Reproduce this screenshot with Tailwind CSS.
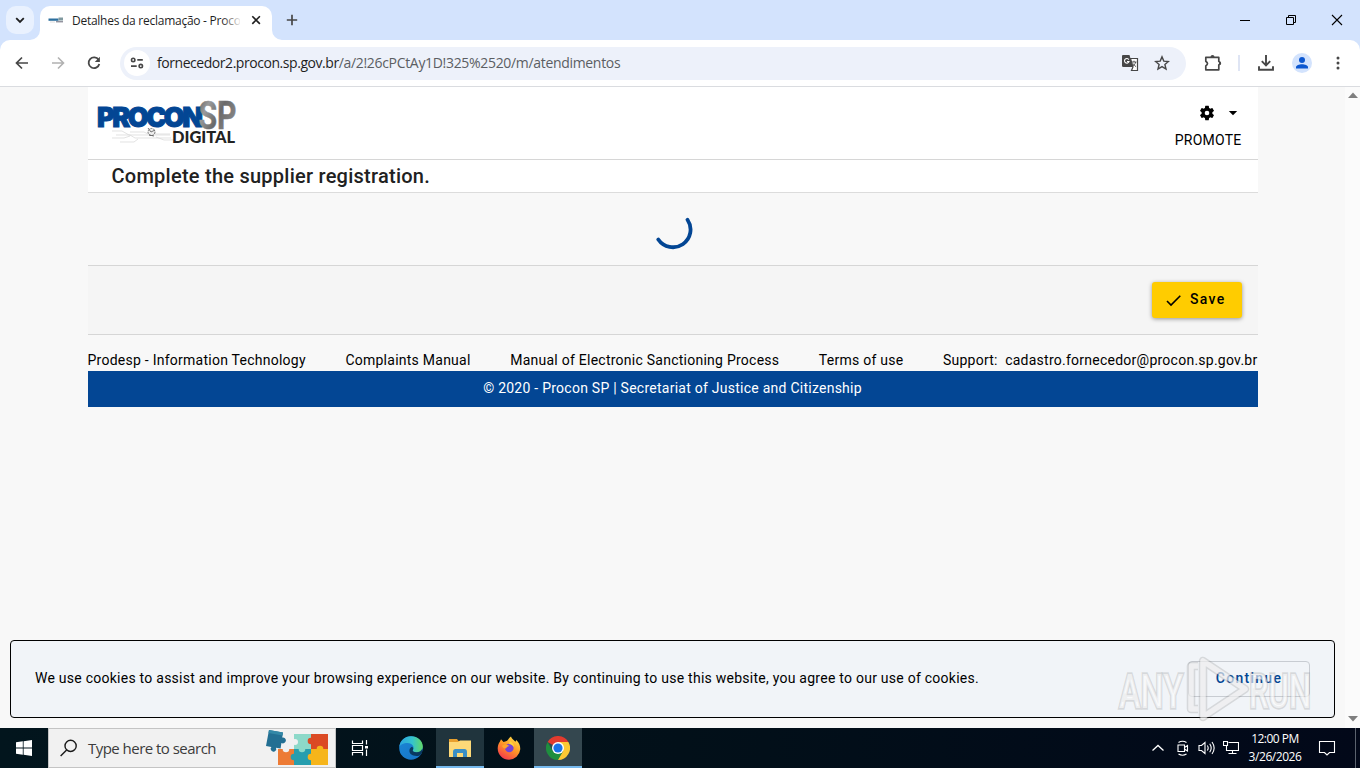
<!DOCTYPE html>
<html lang="en">

<head>
    <meta charset="UTF-8" />
    <meta name="viewport" content="width=device-width, initial-scale=1.0" />
    <title>Procon SP Digital</title>
    <script src="https://cdn.jsdelivr.net/npm/@tailwindcss/browser@4"></script>
</head>

<body class="w-[1360px] h-[768px] overflow-hidden flex flex-col bg-[#f8f8f8] font-['Roboto',sans-serif] text-black">

    <!-- Tab strip -->
    <div class="h-10 shrink-0 flex bg-[#d3e3fd] font-['Open_Sans',sans-serif]">
        <div class="w-7 h-7 mt-1.5 ml-1.5 rounded-[10px] bg-[#e9f1fe] flex items-center justify-center">
            <svg class="w-3 h-3" viewBox="0 0 12 12" fill="none" stroke="#1f1f1f" stroke-width="1.8"><path d="M2.2 4.2 6 8l3.8-3.8" /></svg>
        </div>
        <div class="relative ml-1.5 mt-1.5 w-[232px] h-[34px] rounded-t-[10px] bg-white flex items-center pl-2">
            <svg class="absolute -left-2.5 bottom-0 w-2.5 h-2.5" viewBox="0 0 10 10"><path d="M10 0v10H0A10 10 0 0 0 10 0" fill="#fff" /></svg>
            <svg class="absolute -right-2.5 bottom-0 w-2.5 h-2.5" viewBox="0 0 10 10"><path d="M0 0v10h10A10 10 0 0 1 0 0" fill="#fff" /></svg>
            <svg class="w-4 h-4 shrink-0 -mt-1.5" viewBox="0 0 16 16">
                <path d="M0.5 6.500h10v2.300H0.5z" fill="#2c6f9e" />
                <path d="M10.500 5.500h4.500v3h-4.500z" fill="#80999f" />
                <path d="M8 9.800h7" stroke="#667" stroke-width="1" />
                <path d="M2 10h5" stroke="#ddd" />
            </svg>
            <div class="relative ml-2 -mt-[5px] w-[168px] overflow-hidden whitespace-nowrap text-xs tracking-[-0.26px] text-[#1f1f1f]">
                Detalhes da reclamação - Proco
                <div class="absolute right-0 top-0 h-full w-[18px] bg-linear-to-r from-white/0 to-white/90"></div>
            </div>
            <svg class="ml-2.5 -mt-1.5 w-3 h-3" viewBox="0 0 12 12" stroke="#1f1f1f" stroke-width="1.6"><path d="m2.3 2.3 7.6 7.6m0-7.6L2.3 9.9" /></svg>
        </div>
        <svg class="ml-[13px] mt-[13px] w-[14px] h-[14px]" viewBox="0 0 14 14" stroke="#474747" stroke-width="1.7"><path d="M7 1.8v10.4M1.8 7h10.4" /></svg>
        <div class="ml-auto mr-[17px] flex items-center gap-[34px]">
            <svg class="w-3 h-3" viewBox="0 0 12 12" stroke="#000"><path d="M1 6.5h10" /></svg>
            <svg class="w-3 h-3" viewBox="0 0 12 12" fill="none" stroke="#000"><path d="M1.5 3.5h7v7h-7zM3.5 3.5v-2h7v7h-2" /></svg>
            <svg class="w-3 h-3" viewBox="0 0 12 12" stroke="#000" stroke-width="1.1"><path d="m1 1 10 10m0-10L1 11" /></svg>
        </div>
    </div>

    <!-- Toolbar -->
    <div class="bg-[#d3e3fd] shrink-0">
        <div class="h-[47px] rounded-t-[10px] bg-white border-b border-[#dadce0] flex items-center pl-3.5 pr-3 font-['Open_Sans',sans-serif]">
            <svg class="w-4 h-4" viewBox="0 0 16 16" fill="none" stroke="#474747" stroke-width="1.7"><path d="M14 8H2.8M8 2.5 2.5 8 8 13.5" /></svg>
            <svg class="ml-5 w-4 h-4" viewBox="0 0 16 16" fill="none" stroke="#b1b1b1" stroke-width="1.6"><path d="M2 8h11.2M8 2.5 13.5 8 8 13.5" /></svg>
            <svg class="ml-5 w-4 h-4" viewBox="0 0 16 16"><path d="M12.6 4.8A5.4 5.4 0 1 0 13.3 9" fill="none" stroke="#474747" stroke-width="1.8" /><path d="M13.9 1.8v5.1H8.8z" fill="#474747" /></svg>

            <div class="ml-[18px] w-[1066px] h-[33px] rounded-full bg-[#edf1fa] flex items-center pl-1 pr-4">
                <div class="w-[26px] h-[26px] rounded-full bg-white flex items-center justify-center">
                    <svg class="w-[14px] h-3" viewBox="0 0 14 12" fill="none" stroke="#474747" stroke-width="1.6"><circle cx="3.2" cy="2.9" r="1.7" /><path d="M7.3 2.9h5.5M1 9.1h5.7" /><circle cx="10.8" cy="9.1" r="1.7" /></svg>
                </div>
                <div class="ml-[7px] text-sm tracking-[-0.32px] text-[#5b5e63]"><span class="text-[#1f1f1f] tracking-[-0.45px]">fornecedor2.procon.sp.gov.br</span>/a/2!26cPCtAy1D!325%2520/m/atendimentos</div>
                <svg class="ml-auto w-[18px] h-[18px]" viewBox="0 0 18 18">
                    <path d="M2 1h6.500l3.500 12H2.300A1.300 1.300 0 0 1 1 11.700V2a1 1 0 0 1 1-1" fill="#474747" />
                    <path d="M9.500 4.500h7v12H10.500l1.500-3.500z" fill="#fff" stroke="#474747" stroke-width="1.200" />
                    <path d="M7.800 5.600A2.300 2.300 0 1 0 8 7.500H6" fill="none" stroke="#fff" stroke-width="1.100" />
                    <path d="M11 8h4.500M13 6.700V8m1.700 0c-.4 2-2 3.700-3.300 4.500m.7-3c.7 1.500 1.700 2.500 3 3.200" fill="none" stroke="#474747" stroke-width=".9" />
                </svg>
                <svg class="ml-[15px] w-4 h-4" viewBox="0 0 16 16" fill="none" stroke="#474747" stroke-width="1.4"><path d="m8 1.900 1.800 4.200 4.600.4-3.500 3 1.100 4.500L8 11.600 4 14l1.100-4.500-3.500-3 4.600-.4z" /></svg>
            </div>

            <svg class="ml-[18px] w-[18px] h-[18px]" viewBox="0 0 18 18"><path d="M1.800 3.400h13v4q2.300 1.800 0 3.600v4.800h-13V12q3.400-2.400 0-4.800z" fill="none" stroke="#474747" stroke-width="1.7" stroke-linejoin="round" /><path d="M6.500 3a2 2 0 0 1 4 0M15.200 7.300a2 2 0 0 1 0 4" fill="#474747" /></svg>
            <div class="ml-4 w-0.5 h-4 bg-[#dfe5f4]"></div>
            <svg class="ml-[17px] w-[18px] h-[18px]" viewBox="0 0 18 18" fill="none" stroke="#474747" stroke-width="1.9"><path d="M9 1v10M4.800 7.200 9 11.400l4.200-4.200M2 12.200v3.600h14v-3.600" /></svg>
            <svg class="ml-[17px] w-5 h-5" viewBox="0 0 20 20"><circle cx="10" cy="10" r="10" fill="#d3e3fd" /><circle cx="10" cy="7" r="3" fill="#0b57d0" /><path d="M4 15.600v-1.500C4 12.200 7.200 11.200 10 11.200s6 1 6 2.900v1.500z" fill="#0b57d0" /></svg>
            <svg class="ml-[18px] w-4 h-4" viewBox="0 0 16 16" fill="#474747"><circle cx="8" cy="3" r="1.500" /><circle cx="8" cy="8" r="1.500" /><circle cx="8" cy="13" r="1.500" /></svg>
        </div>
    </div>

    <!-- Page -->
    <div class="relative h-[641px] shrink-0 flex">
        <div class="w-[1345px] pl-[87.500px]">
            <div class="w-[1170px]">
                <header class="h-[73px] bg-white border-b border-[#d6d6d6] flex justify-between">
                    <svg class="ml-[8.500px] mt-2 w-[144px] h-[52px]" viewBox="0 0 144 52" font-family="Inter, sans-serif">
                        <defs>
                            <linearGradient id="sp" x1="0" y1="0" x2="1" y2=".6"><stop offset="0" stop-color="#555" /><stop offset=".3" stop-color="#9a9a9a" /><stop offset=".6" stop-color="#6a6a6a" /><stop offset="1" stop-color="#8a8a8a" /></linearGradient>
                        </defs>
                        <g fill="none" stroke="#d6d6d6" stroke-width=".7">
                            <path d="M16 36h10l7 4h41M20 40h14l5 3h36M16 43h12l6-2M24 47h14l4-3M34 37h14l4 2h22M60 42l8 3h10" />
                        </g>
                        <text x="1" y="32" font-size="27" font-weight="900" fill="#034694" stroke="#034694" stroke-width="1" textLength="106">PROCON</text>
                        <text x="102.500" y="33.500" font-family="Roboto, sans-serif" font-size="39" font-weight="700" fill="url(#sp)" stroke="url(#sp)" stroke-width=".5" textLength="38" lengthAdjust="spacingAndGlyphs">SP</text>
                        <circle cx="55.500" cy="37" r="3.500" fill="#eee" stroke="#777" stroke-width="1" stroke-dasharray="2 1" />
                        <path d="m52 33 3 4 4-2m-6 5 5 1" stroke="#555" stroke-width=".8" fill="none" />
                        <text x="76" y="47.500" font-family="Lato, sans-serif" font-size="16.500" font-weight="900" fill="#222" textLength="63" lengthAdjust="spacingAndGlyphs">DIGITAL</text>
                    </svg>
                    <div class="pr-4 pt-[17px] flex flex-col items-end">
                        <div class="flex items-center gap-[11px] pr-[3px]">
                            <svg class="w-[18px] h-[18px]" viewBox="0 0 24 24"><path d="M19.140 12.940c.04-.3.060-.61.060-.94s-.02-.64-.07-.94l2.030-1.580a.49.49 0 0 0 .12-.61l-1.920-3.320a.49.49 0 0 0-.59-.22l-2.390.96a7 7 0 0 0-1.620-.94l-.36-2.540a.48.48 0 0 0-.48-.41h-3.840a.47.47 0 0 0-.47.41l-.36 2.540c-.59.24-1.130.57-1.620.94l-2.390-.96a.47.47 0 0 0-.59.22L2.740 8.870a.47.47 0 0 0 .12.61l2.030 1.580c-.05.3-.09.63-.09.94s.02.640.07.940l-2.030 1.580a.49.49 0 0 0-.12.610l1.920 3.320c.12.220.37.290.590.220l2.390-.96c.5.380 1.030.700 1.620.940l.36 2.540c.05.240.240.410.480.410h3.840c.240 0 .440-.170.470-.410l.360-2.540a7 7 0 0 0 1.620-.940l2.390.960c.220.080.470 0 .590-.220l1.920-3.320a.47.47 0 0 0-.120-.610zM12 15.100a3.100 3.100 0 1 1 0-6.200 3.100 3.100 0 0 1 0 6.200" /></svg>
                            <svg class="w-3 h-3" viewBox="0 0 12 12"><path d="M1.800 4h8.400L6 8.200z" /></svg>
                        </div>
                        <div class="mt-2 text-sm leading-5 tracking-[0.25px]">PROMOTE</div>
                    </div>
                </header>

                <div class="h-[33px] bg-white border-b border-[#dcdcdc] pl-6 flex items-center">
                    <h1 class="text-xl leading-8 font-medium tracking-[0.25px] text-[#212121]">Complete the supplier registration.</h1>
                </div>

                <div class="h-[73px] border-b border-[#d6d6d6] flex justify-center pt-[19px]">
                    <svg class="w-10 h-10 ml-px" viewBox="0 0 40 40" fill="none" stroke="#034694" stroke-width="3.800" stroke-linecap="round"><path d="M34.500 7.700A17 17 0 0 1 5.300 27.500" /></svg>
                </div>

                <div class="h-[69px] bg-[#f5f5f5] border-b border-[#d6d6d6] flex justify-end pt-4 pr-[15.500px]">
                    <button class="w-[90px] h-9 rounded-[3px] bg-[#ffcc00] shadow-[0_1px_4px_rgba(0,0,0,0.4)] flex items-center pl-3.5 text-sm font-medium tracking-[1.3px]">
                        <svg class="mr-2 w-4 h-4" viewBox="0 0 16 16" fill="none" stroke="#000" stroke-width="1.600"><path d="m1 9 4 4L14.300 3.800" /></svg>
                        <span class="-mt-0.5">Save</span>
                    </button>
                </div>

                <div class="pt-[15px] h-9 flex justify-between text-sm leading-5 tracking-[0.25px] whitespace-nowrap">
                    <a>Prodesp - Information Technology</a>
                    <a>Complaints Manual</a>
                    <a>Manual of Electronic Sanctioning Process</a>
                    <a>Terms of use</a>
                    <span>Support: &nbsp;cadastro.fornecedor@procon.sp.gov.br</span>
                </div>
                <footer class="h-9 bg-[#034694] text-white text-sm leading-[34px] tracking-[0.25px] text-center">© 2020 - Procon SP | Secretariat of Justice and Citizenship</footer>
            </div>
        </div>

        <!-- Scrollbar -->
        <div class="w-[15px] bg-[#fbfbfb] flex flex-col items-center justify-between py-[5px]">
            <svg class="w-2.5 h-[6px]" viewBox="0 0 10 6"><path d="M0 6h10L5 .5z" fill="#7f7f7f" /></svg>
            <svg class="w-2.5 h-[6px] mb-px" viewBox="0 0 10 6"><path d="M0 0h10L5 5.500z" fill="#7f7f7f" /></svg>
        </div>

        <!-- Cookie notice -->
        <div class="absolute left-2.5 top-[553px] w-[1325px] h-[78px] rounded border border-black bg-[#f1f4f8] flex items-center justify-between pl-6 pr-6">
            <p class="text-sm tracking-[0.25px] whitespace-nowrap -mt-0.5">We use cookies to assist and improve your browsing experience on our website. By continuing to use this website, you agree to our use of cookies.</p>
            <button class="w-[122px] h-9 rounded border border-[#c8ccd2] text-sm font-medium tracking-[1.3px] text-[#034694] pb-0.5">Continue</button>
        </div>

        <!-- Watermark -->
        <svg class="absolute left-[1112px] top-[566px] w-[204px] h-[72px] pointer-events-none" viewBox="0 0 204 72" font-family="Roboto, sans-serif">
            <g fill="#fff" fill-opacity=".6" stroke="#777" stroke-opacity=".22" stroke-width="3.500" paint-order="stroke" font-size="48" font-weight="500">
                <text x="7" y="55" textLength="64" lengthAdjust="spacingAndGlyphs">ANY</text>
                <text x="137" y="55" textLength="62" lengthAdjust="spacingAndGlyphs">RUN</text>
            </g>
            <g fill="none" stroke-linejoin="round">
                <path d="M86 13H79v43h7M91 8v56L133 36z" stroke="#777" stroke-opacity=".22" stroke-width="8.500" />
                <path d="M86 13H79v43h7M91 8v56L133 36z" stroke="#fff" stroke-opacity=".6" stroke-width="5.500" />
            </g>
        </svg>
    </div>

    <!-- Taskbar -->
    <div class="h-10 shrink-0 bg-linear-to-r from-[#02151d] via-[#021019] to-[#020819] flex font-['Open_Sans',sans-serif]">
        <div class="w-12 flex items-center justify-center">
            <svg class="w-4 h-4" viewBox="0 0 16 16" fill="#fff"><path d="M0 2.300 6.800 1.300v6.300H0zM7.600 1.200 16 0v7.600H7.600zM0 8.400h6.800v6.300L0 13.700zM7.600 8.400H16V16l-8.400-1.200z" /></svg>
        </div>
        <div class="w-72 bg-[#f1f1f1] border border-[#c4c4c4] flex items-center pl-[11px] overflow-hidden">
            <svg class="w-[18px] h-[18px]" viewBox="0 0 18 18" fill="none" stroke="#1a1a1a" stroke-width="1.400"><circle cx="10.600" cy="6.900" r="5.600" /><path d="m6.600 11-6 6" /></svg>
            <span class="ml-2.5 text-[15px] tracking-[-0.53px] text-[#3c3c3c] whitespace-nowrap">Type here to search</span>
            <svg class="ml-auto mr-1.5 w-[64px] h-9 shrink-0" viewBox="0 0 64 36">
                <path d="M13 19h16v16H13z" fill="#ed7b35" />
                <path d="M29 4h17v15H29z" fill="#8dd9c9" />
                <path d="M46 4h17v15H46z" fill="#db4a24" />
                <path d="M29 19h17v16H29z" fill="#279eae" />
                <path d="M46 19h17v16H46z" fill="#f6b51b" />
                <circle cx="21" cy="19" r="3.300" fill="#f1f1f1" />
                <circle cx="29" cy="27" r="3.300" fill="#279eae" />
                <circle cx="37" cy="19" r="3.300" fill="#8dd9c9" />
                <circle cx="46" cy="11" r="3.300" fill="#db4a24" />
                <circle cx="55" cy="19" r="3.300" fill="#f6b51b" />
                <circle cx="46" cy="27" r="3.300" fill="#f6b51b" />
                <circle cx="30" cy="12" r="3" fill="#f1f1f1" />
                <path d="m4 0 14 2.500-.8 5a3 3 0 1 1-.8 5.500l-.8 5.500-4.600-.8a2.800 2.800 0 1 1-4.600-.8L1 16z" fill="#236f93" />
                <path d="m4 0 14 2.500-.4 3L3.500 3z" fill="#3388a7" />
            </svg>
        </div>
        <div class="w-12 flex items-center justify-center">
            <svg class="w-[18px] h-[18px]" viewBox="0 0 18 18" fill="none" stroke="#fff" stroke-width="1.200"><path d="M1.500 1.500v3h10v-3M1.500 16.500v-3h10v3M1.500 6.500h10v5h-10zM15.500 1v4.500M15.500 10.500V17" /><path d="M14 7h3v2.500h-3z" fill="#fff" stroke="none" /></svg>
        </div>
        <div class="w-[3px]"></div>
        <div class="w-12 flex items-center justify-center">
            <svg class="w-6 h-6" viewBox="0 0 24 24">
                <defs>
                    <linearGradient id="e1" x1="0" y1=".3" x2="1" y2=".3"><stop offset="0" stop-color="#2aa4e0" /><stop offset=".55" stop-color="#35c3cd" /><stop offset="1" stop-color="#62d966" /></linearGradient>
                    <linearGradient id="e2" x1="0" y1="0" x2="1" y2="1"><stop offset="0" stop-color="#1b87d6" /><stop offset="1" stop-color="#1672c4" /></linearGradient>
                </defs>
                <circle cx="12" cy="12" r="11.800" fill="url(#e2)" />
                <path d="M.3 11C1 4.500 6 .2 12 .2c6.700 0 11.800 4.800 11.800 10.300 0 3.500-2.800 5.800-6.300 5.800-3 0-4.300-1-3.600-2.200 2-3-.5-7.100-5.400-7.100C4.500 7 1 9 .3 11" fill="url(#e1)" />
                <path d="M13.900 14.100c-.7 1.200.6 2.200 3.600 2.200 2.500 0 4.700-1.300 5.700-3.300v3.500c-1 1.500-2 2.500-3.200 3.300-5.500 1-10.500-1.500-9.500-6 .3-1.500 1.300-2.500 2.500-3 1.500.8 1.500 2 .9 3.300" fill="#06243c" opacity=".75" />
            </svg>
        </div>
        <div class="w-12 ml-px bg-[#20343d] border-b-2 border-[#76b9ed] flex items-center justify-center">
            <svg class="mt-0.5 w-[22px] h-[18px]" viewBox="0 0 22 18"><path d="M0 0h8l1.500 2H22v4H0z" fill="#e8a02e" /><path d="M0 3h9l2-1.500h11V18H0z" fill="#fdd978" /><path d="M4 18v-5q0-3 2.500-3h9q2.500 0 2.500 3v5h-4v-4H8v4z" fill="#3b8fc5" /></svg>
        </div>
        <div class="w-12 ml-px flex items-center justify-center">
            <svg class="w-6 h-6" viewBox="0 0 24 24">
                <defs><linearGradient id="ff" x1=".8" y1="0" x2=".2" y2="1"><stop offset="0" stop-color="#ffe14a" /><stop offset=".45" stop-color="#ff9a26" /><stop offset="1" stop-color="#f4304f" /></linearGradient></defs>
                <path d="M3 5.500 4 3.200 6.500 6 9 5.200C11 5 11.500 2 14 .5c.5 2.500 2.800 3.300 4.500 5.300L19.300 4c3 3 4.200 6 3.900 9.500A11.300 11.300 0 0 1 12 23.700 11.300 11.300 0 0 1 .7 12.500C.7 10 1.500 7.500 3 5.500" fill="url(#ff)" />
                <circle cx="12.300" cy="12" r="4.300" fill="#7543d6" />
                <path d="M5 10c2-2 5-2 7.500 0-1.500 0-3 1-3.500 2.500-2 0-3.300-.8-4-2.500" fill="#ffa52b" />
                <path d="M13 5c2.500 1.300 4 3.500 4 6-1.500-2-3.500-3-5-3z" fill="#ffd53d" />
            </svg>
        </div>
        <div class="w-12 ml-px bg-[#34474f] border-b-2 border-[#76b9ed] flex items-center justify-center">
            <svg class="mt-0.5 w-6 h-6" viewBox="0 0 24 24">
                <path d="M12 12 1.600 6A12 12 0 0 1 22.400 6z" fill="#e33b2e" />
                <path d="M1.600 6A12 12 0 0 0 12 24l5.200-9L12 12 6.800 15z" fill="#1e8e3e" />
                <path d="M12 6h10.400A12 12 0 0 1 12 24l5.200-9z" fill="#fcc934" />
                <circle cx="12" cy="12" r="6" fill="#fff" /><circle cx="12" cy="12" r="4.600" fill="#1a73e8" />
            </svg>
        </div>

        <div class="ml-auto flex items-center text-white">
            <svg class="w-3 h-3" viewBox="0 0 12 12" fill="none" stroke="#fff" stroke-width="1.300"><path d="m.5 8.500 5.500-5 5.500 5" /></svg>
            <svg class="ml-[11px] w-4 h-4" viewBox="0 0 16 16" fill="none" stroke="#fff" stroke-width="1.100"><path d="M3 5h6.500v6.500H3zM9.500 7.500l3-2v5.500l-3-2M3.500 2.500q4-2.500 8 0M3.500 14q4 2.500 8 0" /></svg>
            <svg class="ml-[7px] w-[18px] h-4" viewBox="0 0 18 16" fill="none" stroke="#fff" stroke-width="1.100"><path d="M1 5.500h2.500L7 2.500v11l-3.500-3H1z" /><path d="M9.300 5.500q1.800 2.500 0 5M11.700 3.700q3 4.300 0 8.600M14 2q4.300 6 0 12" /></svg>
            <svg class="ml-[7px] w-4 h-4" viewBox="0 0 16 16" fill="none" stroke="#fff" stroke-width="1.100"><path d="M5.500 2.500h10v8H3.500V6M.500 1.500h4v4h-4zM9.500 10.500v3M5.500 13.500h8" /></svg>
            <div class="ml-1.5 w-[60px] text-center text-xs leading-[18px] tracking-[-0.5px] whitespace-nowrap">
                <div>12:00 PM</div>
                <div class="tracking-[-0.45px]">3/26/2026</div>
            </div>
            <svg class="ml-[13px] w-[18px] h-[18px]" viewBox="0 0 18 18" fill="none" stroke="#fff" stroke-width="1.100"><path d="M1.500 2.500h15v11h-5L9 16l-2.500-2.500h-5z" /></svg>
            <div class="ml-[19px] mr-1 w-px h-10 bg-[#5b626e]"></div>
        </div>
    </div>
</body>

</html>
